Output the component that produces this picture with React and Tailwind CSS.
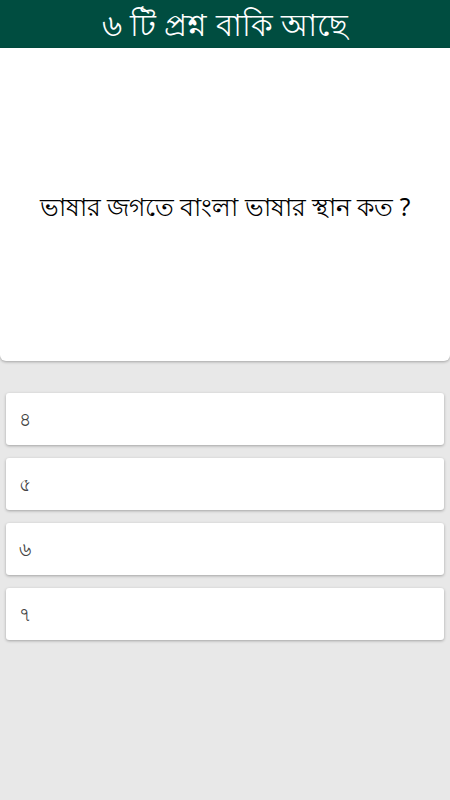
import React from 'react';

const options = ['৪', '৫', '৬', '৭'];

export default function App() {
  return (
    <div className="min-h-[800px] bg-[#e8e8e8] font-['Noto_Sans',sans-serif]">
      {/* Header */}
      <div className="h-[48px] bg-[#004d40] flex items-center justify-center">
        <h1 className="text-white text-[31px] leading-none">৬ টি প্রশ্ন বাকি আছে</h1>
      </div>

      {/* Question card */}
      <div className="h-[313px] bg-white rounded-b-md shadow-[0_1px_3px_rgba(0,0,0,0.3)] flex items-center justify-center px-4 pt-[5px]">
        <p className="text-black text-[24.5px] text-center">ভাষার জগতে বাংলা ভাষার স্থান কত ?</p>
      </div>

      {/* Options */}
      <div className="pt-[32px] px-[6px] flex flex-col gap-[13px]">
        {options.map((opt, i) => (
          <div
            key={i}
            className="h-[52px] bg-white rounded-[3px] shadow-[0_1px_3px_rgba(0,0,0,0.3)] flex items-center px-[13px]"
          >
            <span className="text-[#444] text-[19px]">{opt}</span>
          </div>
        ))}
      </div>
    </div>
  );
}
